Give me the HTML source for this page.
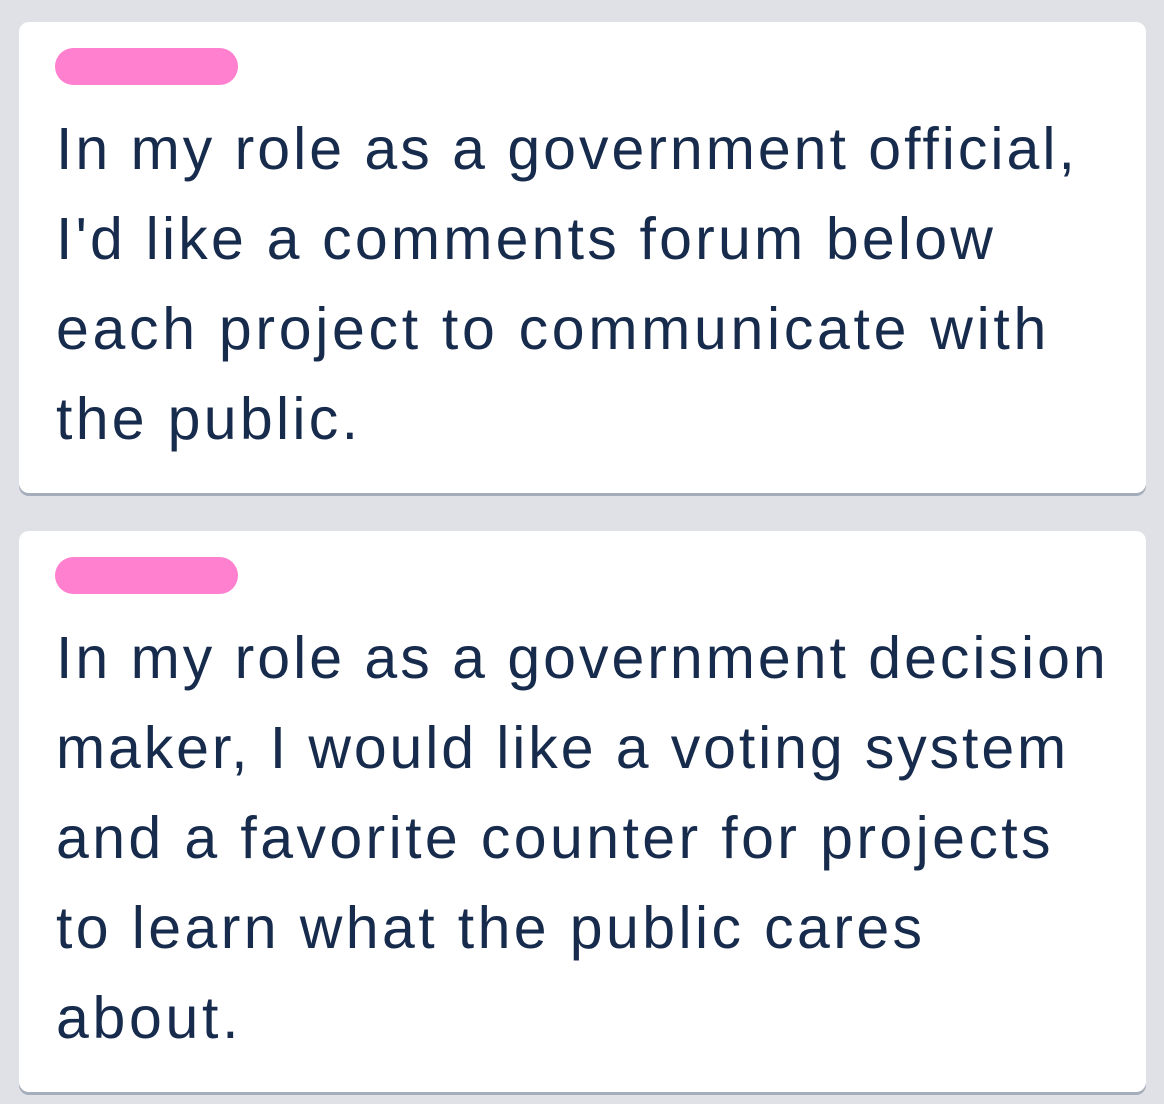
<!DOCTYPE html>
<html><head><style>
html,body{margin:0;padding:0;background:#dfe1e6;width:1164px;height:1104px;overflow:hidden}
.card{position:absolute;left:19px;width:1127px;background:#fff;border-radius:10px;box-shadow:0 3px 0 #a5adba}
.lab{position:absolute;left:36px;width:183px;height:37px;border-radius:19px;background:#ff80ce}
.t{position:absolute;left:37px;font-family:"Liberation Sans",sans-serif;font-size:59px;line-height:90px;color:#172b4d;white-space:nowrap}
.t div{height:90px}
</style></head><body>
<div class="card" style="top:22px;height:471px">
<div class="lab" style="top:26px"></div>
<div class="t" style="top:82px">
<div style="letter-spacing:3.0px">In my role as a government official,</div>
<div style="letter-spacing:3.2px">I'd like a comments forum below</div>
<div style="letter-spacing:3.7px">each project to communicate with</div>
<div style="letter-spacing:3.3px">the public.</div>
</div>
</div>
<div class="card" style="top:531px;height:561px">
<div class="lab" style="top:26px"></div>
<div class="t" style="top:82px">
<div style="letter-spacing:3.0px">In my role as a government decision</div>
<div style="letter-spacing:2.9px">maker, I would like a voting system</div>
<div style="letter-spacing:3.4px">and a favorite counter for projects</div>
<div style="letter-spacing:3.4px">to learn what the public cares</div>
<div style="letter-spacing:3.7px">about.</div>
</div>
</div>
</body></html>
